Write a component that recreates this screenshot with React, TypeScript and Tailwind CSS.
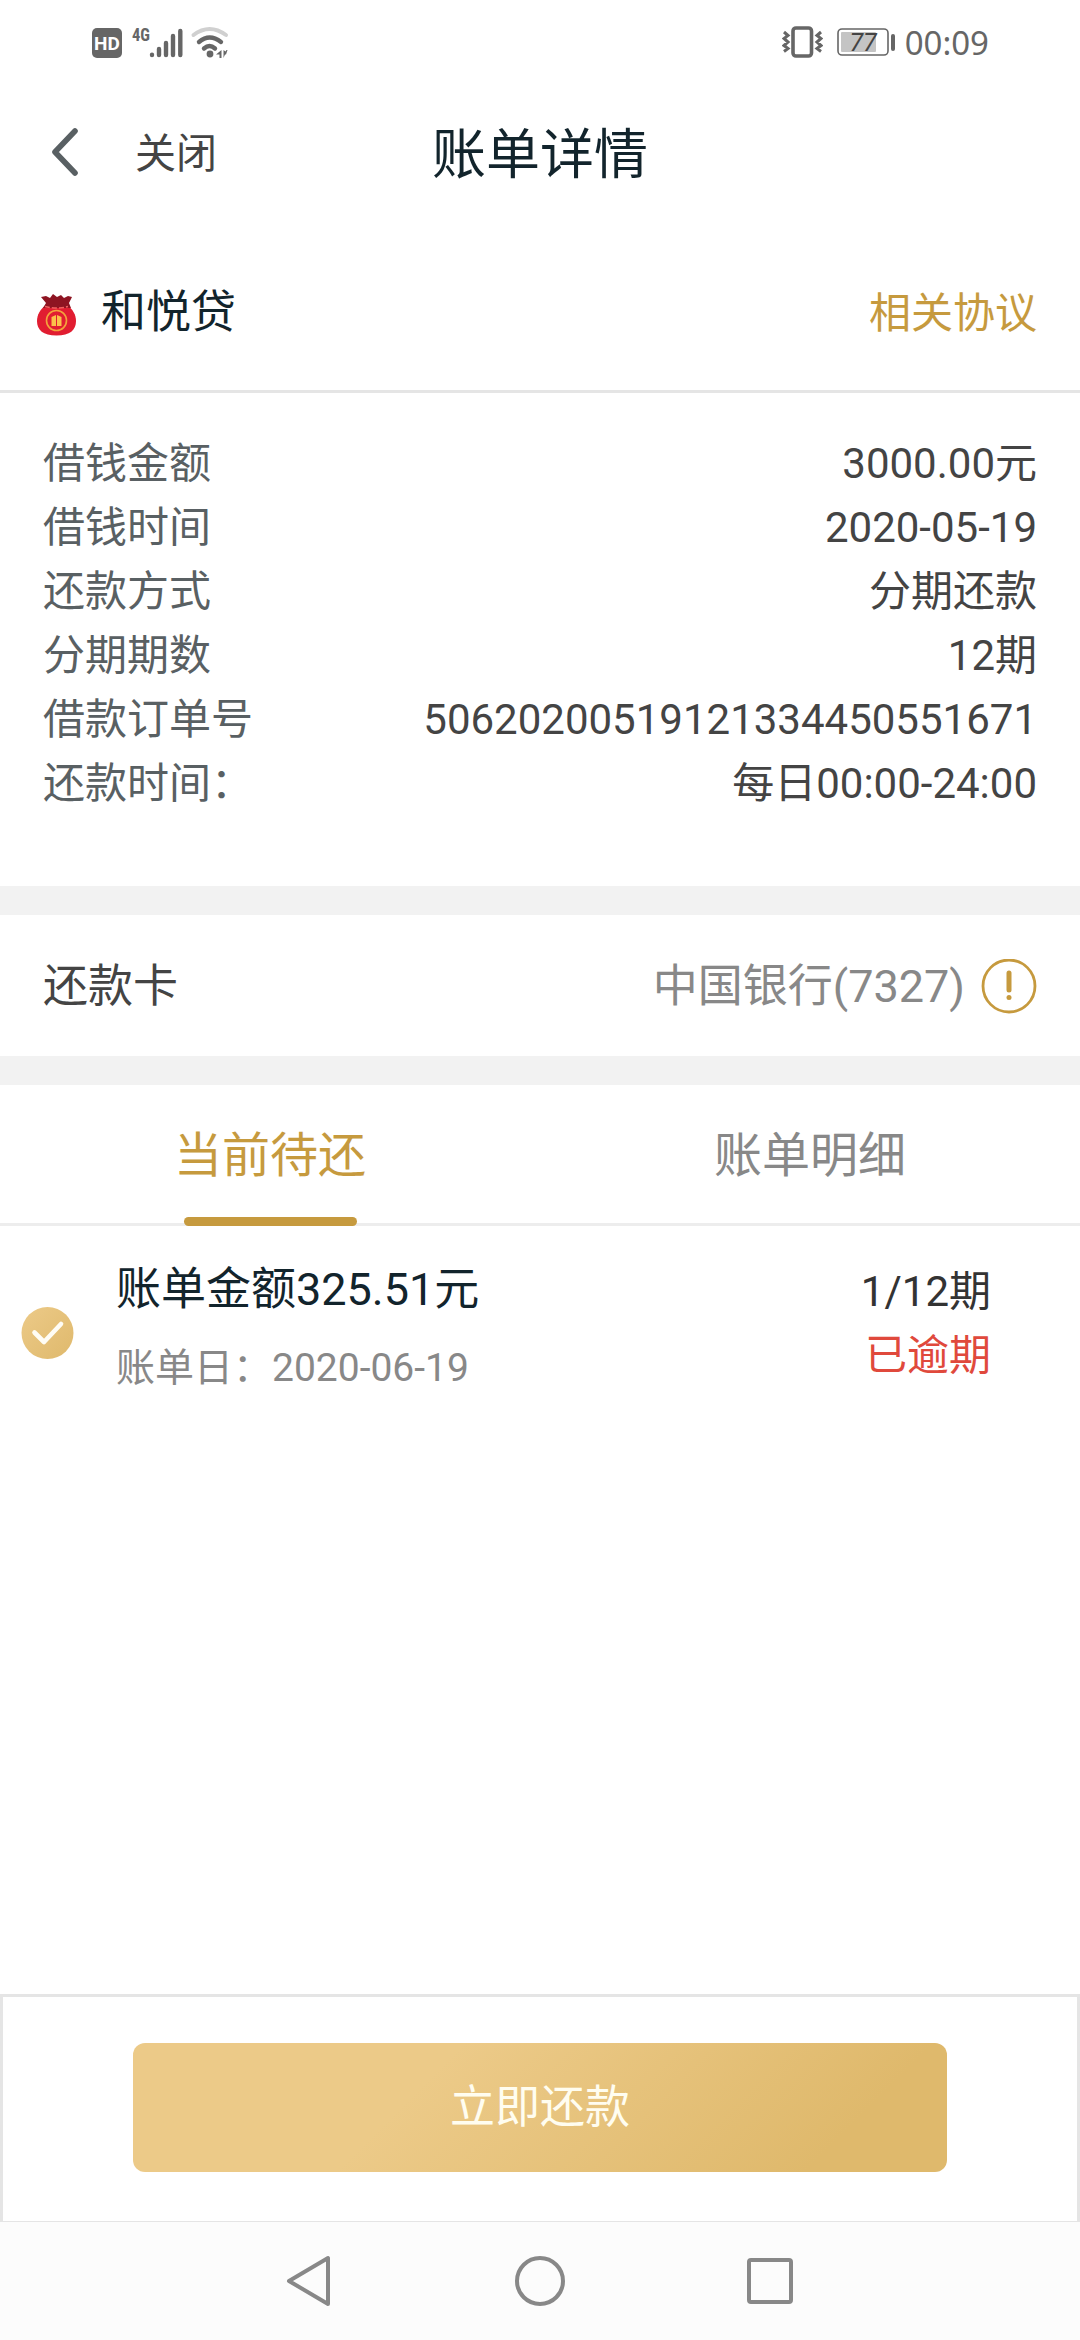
import type { ReactNode } from 'react';

const details = [
  { label: '借钱金额', value: '3000.00元' },
  { label: '借钱时间', value: '2020-05-19' },
  { label: '还款方式', value: '分期还款' },
  { label: '分期期数', value: '12期' },
  { label: '借款订单号', value: '50620200519121334450551671' },
  { label: '还款时间：', value: '每日00:00-24:00' },
];

function StatusBar() {
  return (
    <div className="flex h-[84px] items-center justify-between pl-[91px] pr-[91px] text-[#666]">
      <svg width="140" height="50" viewBox="0 0 140 50" fill="none">
        <rect x="1" y="11" width="30" height="30" rx="5" fill="#666" />
        <text x="16" y="33" textAnchor="middle" fontFamily="Roboto, sans-serif" fontSize="19" fontWeight="700" fill="#fff">HD</text>
        <text x="41" y="24" fontFamily="'Roboto Condensed', Roboto, sans-serif" fontSize="19" fontWeight="700" fill="#666" textLength="18" lengthAdjust="spacingAndGlyphs">4G</text>
        <g stroke="#666" strokeWidth="4.4" strokeLinecap="round">
          <path d="M61 37.8v.2M68 32v6M75 26v12M82 19v19M89.300 14v24" />
        </g>
        <path d="M102.500 18Q118.500 6 135 18" stroke="#d0d0d0" strokeWidth="4" strokeLinecap="round" />
        <path d="M108 25Q118.500 16 130 25" stroke="#666" strokeWidth="4.400" strokeLinecap="round" />
        <path d="M113 31.500Q118.500 26.500 124 31.500" stroke="#666" strokeWidth="4.400" strokeLinecap="round" />
        <circle cx="119" cy="37" r="3.400" fill="#666" />
        <path d="M130.500 33v8h-2v-3.500h-3.500zM132.500 33v8l1.500-3.500h1l1.500-4.500h-1l-1 1.500z" fill="#666" />
      </svg>

      <div className="flex items-center">
        <svg width="41" height="34" viewBox="0 0 41 34" fill="none" stroke="#666">
          <rect x="11" y="3" width="18.500" height="28" rx="3" strokeWidth="3.600" />
          <path d="M2 7l4 3.500-4 3 4 3.500-4 3.500 4 3-4 3M39 7l-4 3.500 4 3-4 3.500 4 3.500-4 3 4 3" strokeWidth="3" />
        </svg>
        <svg className="ml-[14px]" width="60" height="34" viewBox="0 0 60 34" fill="none">
          <rect x="1" y="4" width="50" height="26" rx="4" stroke="#666" strokeWidth="1.600" />
          <rect x="4" y="7" width="35" height="20" rx="1" fill="#c4c4c4" />
          <text x="26" y="26" textAnchor="middle" fontFamily="Roboto, sans-serif" fontStyle="italic" fontSize="25" fill="#444">77</text>
          <rect x="54" y="9" width="4" height="17" rx="2" fill="#666" />
        </svg>
        <span className="ml-[8px] font-['Noto_Sans'] text-[33px] leading-none">00:09</span>
      </div>
    </div>
  );
}

function TitleBar() {
  return (
    <header className="grid h-[138px] grid-cols-3 items-center">
      <div className="flex items-center pl-[50px]">
        <svg width="30" height="50" viewBox="0 0 30 50" fill="none">
          <path d="M25 3L5 24l20 21" stroke="#596063" strokeWidth="5.600" strokeLinecap="round" strokeLinejoin="round" />
        </svg>
        <span className="ml-[55px] pt-[3px] text-[41px] text-[#444]">关闭</span>
      </div>
      <h1 className="pt-[5px] text-center text-[54px] leading-none text-[#12242c]">账单详情</h1>
    </header>
  );
}

function MoneyBag() {
  return (
    <svg className="mt-[4px]" width="42" height="44" viewBox="0 0 42 44" fill="none">
      <path d="M11 11C4 16 1 22 1 28c0 9 6 14.500 19.500 14.500S40 37 40 28c0-6-3-12-10-17z" fill="#e11d31" />
      <path d="M5 4l5-1 4 2 3-4 4 3 4-2 3 3 4-2 4 1-3 6 2 5H7l3-5z" fill="#8e1422" />
      <path d="M9 13.500c7 2 16 2 23 0" stroke="#f0605f" strokeWidth="1.500" strokeDasharray="5 2" />
      <circle cx="20.500" cy="27.500" r="10" stroke="#f3a33c" strokeWidth="1.600" />
      <path d="M15.500 24l4.500-2v11h-4.500zM21 22l4.500 2v9H21z" fill="#fbc04a" />
    </svg>
  );
}

function Tab({ active, children }: { active?: boolean; children: ReactNode }) {
  return (
    <div className={`relative flex flex-1 items-center justify-center pt-[3px] text-[48px] ${active ? 'text-[#c69a3e]' : 'text-[#888]'}`}>
      {children}
      {active && <span className="absolute -bottom-[3px] left-[184px] h-[9px] w-[173px] rounded-full bg-[#c69a3e]" />}
    </div>
  );
}

export default function App() {
  return (
    <div className="flex h-[2340px] w-[1080px] flex-col overflow-hidden bg-white font-[Roboto,'Noto_Sans_CJK_SC',sans-serif]">
      <StatusBar />
      <TitleBar />

      {/* Product */}
      <section className="flex h-[171px] items-center justify-between border-b-[3px] border-[#e5e5e5] pl-[36px] pr-[43px] pt-[14px]">
        <div className="flex items-center text-[45px] text-[#12242c]">
          <MoneyBag />
          <span className="ml-[23px]">和悦贷</span>
        </div>
        <a className="text-[42px] text-[#c69a3e]">相关协议</a>
      </section>

      {/* Loan details */}
      <dl className="h-[493px] px-[43px] pt-[39px] text-[42px] leading-[64px]">
        {details.map((d) => (
          <div key={d.label} className="flex justify-between">
            <dt className="text-[#596063]">{d.label}</dt>
            <dd className="text-[#444]">{d.value}</dd>
          </div>
        ))}
      </dl>

      <div className="h-[29px] bg-[#f2f2f2]" />

      {/* Repayment card */}
      <section className="flex h-[141px] items-center justify-between px-[43px] pt-[2px] text-[45px]">
        <span className="text-[#444]">还款卡</span>
        <div className="flex items-center text-[#888]">
          中国银行(7327)
          <svg className="ml-[16px]" width="56" height="56" viewBox="0 0 56 56" fill="none" stroke="#c69a3e">
            <circle cx="28" cy="27" r="26" strokeWidth="2.800" />
            <path d="M28 14v17" strokeWidth="5" strokeLinecap="round" />
            <circle cx="28" cy="38.500" r="2.500" fill="#c69a3e" stroke="none" />
          </svg>
        </div>
      </section>

      <div className="h-[29px] bg-[#f2f2f2]" />

      <nav className="flex h-[141px] border-b-[3px] border-[#ededed]">
        <Tab active>当前待还</Tab>
        <Tab>账单明细</Tab>
      </nav>

      {/* Current bill */}
      <section className="flex flex-1 items-start pt-[32px] pr-[89px] pl-[21px]">
        <svg className="mt-[48px]" width="53" height="54" viewBox="0 0 53 54" fill="none">
          <defs>
            <linearGradient id="check" x1="0" y1="0" x2="1" y2="1">
              <stop stopColor="#ecca88" />
              <stop offset="1" stopColor="#dfb96c" />
            </linearGradient>
          </defs>
          <circle cx="26.500" cy="27" r="26" fill="url(#check)" />
          <path d="M13.500 26.500l9.500 9.500 17-18" stroke="#fffdf5" strokeWidth="4.600" strokeLinecap="round" strokeLinejoin="round" />
        </svg>
        <div className="ml-[42px] flex-1">
          <p className="text-[45px] leading-[64px] text-[#12242c]">账单金额325.51元</p>
          <p className="mt-[18px] text-[39px] leading-[56px] text-[#888]">账单日：2020-06-19</p>
        </div>
        <div className="pt-[2px] text-right text-[42px] leading-[64px]">
          <p className="text-[#333]">1/12期</p>
          <p className="text-[#e0493c]">已逾期</p>
        </div>
      </section>

      {/* Pay button */}
      <footer className="h-[228px] border-x-[3px] border-t-[3px] border-b border-[#e5e5e5] px-[130px] pt-[46px]">
        <button className="h-[129px] w-full rounded-[12px] bg-linear-[135deg,#ecca88_0%,#ecca88_35%,#dfb96c_85%,#dfb96c_100%] text-[45px] text-[#fffdf0]">
          立即还款
        </button>
      </footer>

      {/* System navigation */}
      <div className="flex h-[118px] justify-center gap-[179px] bg-[#fcfcfc] pt-[33px]">
        <svg width="50" height="52" viewBox="0 0 50 52" fill="none" stroke="#888" strokeWidth="4" strokeLinejoin="round">
          <path d="M43 3v46L4 26z" />
        </svg>
        <svg width="52" height="52" viewBox="0 0 52 52" fill="none" stroke="#888" strokeWidth="4">
          <circle cx="26" cy="26" r="23" />
        </svg>
        <svg width="50" height="52" viewBox="0 0 50 52" fill="none" stroke="#888" strokeWidth="4">
          <rect x="4" y="5" width="42" height="42" rx="2" />
        </svg>
      </div>
    </div>
  );
}
